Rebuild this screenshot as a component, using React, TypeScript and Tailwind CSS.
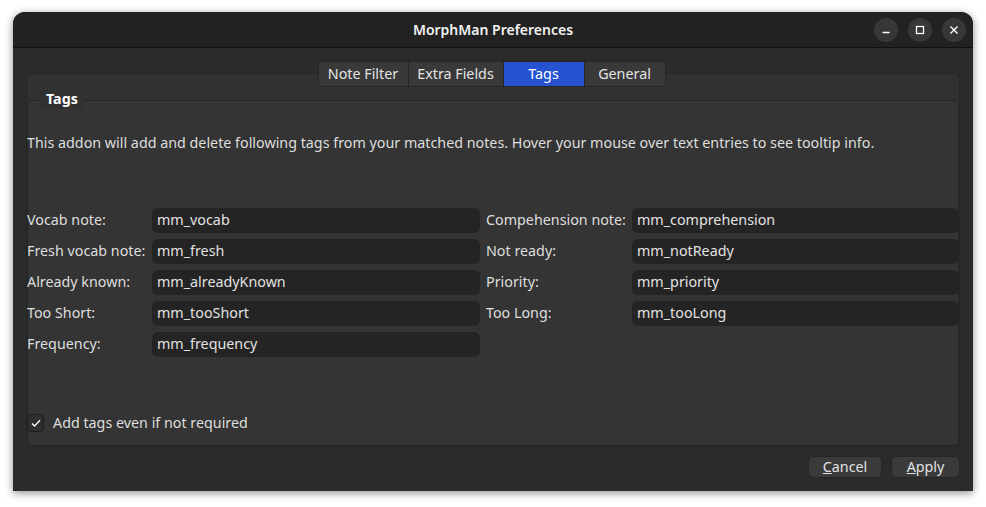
import React from "react";

const font = { fontFamily: '"Noto Sans", "DejaVu Sans", sans-serif' };

function Field({ value }: { value: string }) {
  return (
    <div className="h-[25px] rounded-[6px] bg-[#242424] px-[5px] flex items-center text-[#e2e2e2] text-[14.3px] leading-none">
      {value}
    </div>
  );
}

function Label({ text }: { text: string }) {
  return <div className="h-[25px] flex items-center text-[#dedede] text-[14.3px] leading-none whitespace-nowrap">{text}</div>;
}

export default function App() {
  const tabs = ["Note Filter", "Extra Fields", "Tags", "General"];
  const tabW = ["w-[89px]", "w-[95px]", "w-[81px]", "w-[81px]"];
  return (
    <div className="w-[986px] h-[507px] bg-white pt-[12px] pl-[13px]" style={font}>
      <div className="w-[960px] h-[479px] rounded-t-[12px] overflow-hidden flex flex-col shadow-[0_2px_8px_rgba(0,0,0,0.45)] bg-[#2b2b2b]">
        {/* title bar */}
        <div className="h-[36px] bg-[#222222] border-b border-[#111111] relative flex items-center justify-center shrink-0">
          <span className="text-[#f2f2f2] text-[14px] font-semibold">MorphMan Preferences</span>
          <div className="absolute right-[7px] top-[6px] flex gap-[10px]">
            <div className="w-[24px] h-[24px] rounded-full bg-[#373737] flex items-center justify-center">
              <svg width="12" height="12" viewBox="0 0 12 12"><path d="M2.5 8.5h7" stroke="#fff" strokeWidth="1.5" /></svg>
            </div>
            <div className="w-[24px] h-[24px] rounded-full bg-[#373737] flex items-center justify-center">
              <svg width="12" height="12" viewBox="0 0 12 12"><rect x="2.5" y="2.5" width="7" height="7" fill="none" stroke="#fff" strokeWidth="1.3" /></svg>
            </div>
            <div className="w-[24px] h-[24px] rounded-full bg-[#373737] flex items-center justify-center">
              <svg width="12" height="12" viewBox="0 0 12 12"><path d="M2.5 2.5l7 7M9.5 2.5l-7 7" stroke="#fff" strokeWidth="1.4" /></svg>
            </div>
          </div>
        </div>
        {/* body */}
        <div className="flex-1 px-[13px] flex flex-col">
          <div className="mt-[13px] flex justify-center relative z-10 h-[26px]">
            <div className="flex rounded-[5px] overflow-hidden border border-[#262626] bg-[#393939] -ml-[3px]">
              {tabs.map((t, i) => (
                <div
                  key={t}
                  className={`${tabW[i]} h-full flex items-center justify-center text-[14.3px] leading-none ${i > 0 ? "border-l border-[#262626]" : ""} ${t === "Tags" ? "bg-[#2553d0] text-white" : "text-[#e4e4e4]"}`}
                >
                  {t}
                </div>
              ))}
            </div>
          </div>
          <div className="-mt-[14px] h-[374px] rounded-[5px] border border-[#262626] bg-[#313131] flex flex-col">
            <div className="mt-[26px] flex-1 relative rounded-[5px] border border-[#262626] bg-[#343434]">
              <div className="absolute -top-[12px] left-[12px] px-[6px] bg-[#313131] text-[14.3px] font-bold text-white leading-[20px]">Tags</div>
              <div className="-mx-[1px]">
                <div className="mt-[32px] text-[14.3px] text-[#dedede] leading-[20px] whitespace-nowrap">
                  This addon will add and delete following tags from your matched notes. Hover your mouse over text entries to see tooltip info.
                </div>
                <div className="mt-[55px] grid grid-cols-[125px_328px_152px_327px] gap-x-[0px] gap-y-[6px]">
                  <Label text="Vocab note:" />
                  <Field value="mm_vocab" />
                  <div className="pl-[6px]"><Label text="Compehension note:" /></div>
                  <Field value="mm_comprehension" />
                  <Label text="Fresh vocab note:" />
                  <Field value="mm_fresh" />
                  <div className="pl-[6px]"><Label text="Not ready:" /></div>
                  <Field value="mm_notReady" />
                  <Label text="Already known:" />
                  <Field value="mm_alreadyKnown" />
                  <div className="pl-[6px]"><Label text="Priority:" /></div>
                  <Field value="mm_priority" />
                  <Label text="Too Short:" />
                  <Field value="mm_tooShort" />
                  <div className="pl-[6px]"><Label text="Too Long:" /></div>
                  <Field value="mm_tooLong" />
                  <Label text="Frequency:" />
                  <Field value="mm_frequency" />
                  <div />
                  <div />
                </div>
                <div className="mt-[57px] flex items-center gap-[9px]">
                  <div className="w-[17px] h-[18px] rounded-[4px] border border-[#1e1e1e] bg-[#2e2e2e] flex items-center justify-center">
                    <svg width="12" height="12" viewBox="0 0 12 12"><path d="M2 6.5l2.6 2.6L10 3.2" fill="none" stroke="#fff" strokeWidth="1.4" /></svg>
                  </div>
                  <span className="text-[14.3px] text-[#dedede] leading-none">Add tags even if not required</span>
                </div>
              </div>
            </div>
          </div>
          <div className="mt-[9px] flex justify-end gap-[9px]">
            <div className="w-[74px] h-[22px] rounded-[5px] bg-[#3a3a3a] border border-[#262626] flex items-center justify-center text-[14.3px] text-[#e2e2e2] leading-none">
              <span><span className="underline">C</span>ancel</span>
            </div>
            <div className="w-[69px] h-[22px] rounded-[5px] bg-[#3a3a3a] border border-[#262626] flex items-center justify-center text-[14.3px] text-[#e2e2e2] leading-none">
              <span><span className="underline">A</span>pply</span>
            </div>
          </div>
        </div>
      </div>
    </div>
  );
}
